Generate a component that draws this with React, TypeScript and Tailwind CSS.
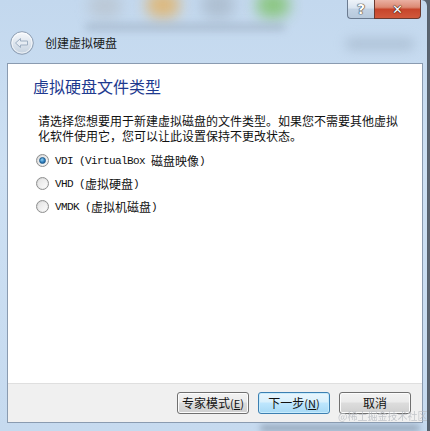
import React from "react";

const cjk = { fontFamily: '"Noto Sans CJK SC", "Noto Sans", sans-serif' };
const mono = { fontFamily: '"Liberation Mono", "DejaVu Sans Mono", monospace' };

function Radio({ checked }: { checked?: boolean }) {
  return (
    <div className="w-[13px] h-[13px] rounded-full border border-[#8e8f8f] bg-gradient-to-br from-[#d4d4d4] to-[#f6f6f6] flex items-center justify-center">
      <div className="w-[9px] h-[9px] rounded-full bg-gradient-to-br from-[#e4e4e4] to-[#fbfbfb] flex items-center justify-center">
        {checked && (
          <div className="w-[7px] h-[7px] rounded-full bg-[radial-gradient(circle_at_40%_35%,#8fd2f5_0%,#2f7fbf_55%,#1b4f80_100%)] border border-[#1f5c8e]" />
        )}
      </div>
    </div>
  );
}

function Label({ latin, cn }: { latin: string; cn: string }) {
  return (
    <span className="flex items-center text-[12px] text-[#111] leading-[14px]">
      <span style={mono} className="text-[11px] tracking-[-0.6px] whitespace-pre">{latin}</span>
      <span style={cjk}>{cn}</span>
      <span style={mono} className="text-[11px] tracking-[-0.6px]">)</span>
    </span>
  );
}

function Btn({ children, primary }: { children: React.ReactNode; primary?: boolean }) {
  return (
    <div
      className={
        "h-[22px] w-[72px] rounded-[3px] border flex items-center justify-center text-[12px] text-[#111] " +
        (primary
          ? "border-[#3c7fb1] bg-[linear-gradient(#eaf6fd_0%,#d9f0fc_45%,#bee6fd_50%,#a7d9f5_100%)] shadow-[inset_0_0_0_1px_#c7ecfd]"
          : "border-[#707070] bg-[linear-gradient(#f2f2f2_0%,#ebebeb_45%,#dddddd_50%,#cfcfcf_100%)] shadow-[inset_0_0_0_1px_#fcfcfc]")
      }
      style={cjk}
    >
      {children}
    </div>
  );
}

export default function App() {
  return (
    <div className="w-[430px] h-[431px] flex overflow-hidden relative bg-[#5a6470]">
      <div className="w-[428px] h-full flex flex-col relative bg-[linear-gradient(180deg,#c3d8ee_0%,#cde0f3_40%,#c6daef_100%)] rounded-tr-[6px] border-r border-[#55606c]">
        {/* blurred background decorations */}
        <div className="absolute left-[88px] top-[-6px] w-[34px] h-[24px] rounded-full bg-[#b8c2cc] blur-[7px] opacity-70" />
        <div className="absolute left-[146px] top-[-8px] w-[34px] h-[26px] rounded-full bg-[#e3b264] blur-[7px] opacity-80" />
        <div className="absolute left-[201px] top-[-8px] w-[34px] h-[26px] rounded-full bg-[#a9b9ca] blur-[7px] opacity-80" />
        <div className="absolute left-[256px] top-[-8px] w-[34px] h-[26px] rounded-full bg-[#7fc36a] blur-[7px] opacity-80" />
        <div className="absolute left-[85px] top-[24px] w-[200px] h-[6px] rounded-full bg-[#8fa0b3] blur-[4px] opacity-60" />
        <div className="absolute left-[345px] top-[38px] w-[70px] h-[12px] rounded-full bg-[#9fb2c6] blur-[6px] opacity-60" />
        <div className="absolute left-[260px] bottom-[0px] w-[160px] h-[6px] rounded-full bg-[#6f7f92] blur-[3px] opacity-60" />

        {/* title bar */}
        <div className="h-[63px] flex flex-col relative">
          <div className="h-[19px] flex justify-end pr-[6px]">
            <div className="w-[27px] h-[19px] rounded-bl-[4px] border border-t-0 border-r-0 border-[#6b7b90] bg-[linear-gradient(#eef3f9_0%,#d9e4f0_45%,#c3d3e4_50%,#b7c9dc_100%)] flex items-center justify-center">
              <span className="text-[14px] font-bold text-white leading-none [text-shadow:0_0_1px_#333,0_0_1px_#333,0_0_1px_#333]" style={{ fontFamily: '"DejaVu Sans", sans-serif' }}>?</span>
            </div>
            <div className="w-[47px] h-[19px] rounded-br-[4px] border border-t-0 border-[#6b3a30] bg-[linear-gradient(#eab0a2_0%,#dc8a74_40%,#c7452b_52%,#d1593c_100%)] flex items-center justify-center">
              <span className="text-[13px] font-bold text-white leading-none [text-shadow:0_0_1px_#3a1a10,0_0_1px_#3a1a10,0_0_1px_#3a1a10]" style={{ fontFamily: '"DejaVu Sans", sans-serif' }}>✕</span>
            </div>
          </div>
          <div className="flex items-center pl-[10px] mt-[12px] h-[24px] gap-[11px]">
            <svg width="24" height="24" viewBox="0 0 24 24">
              <defs>
                <linearGradient id="bg" x1="0" y1="0" x2="0" y2="1">
                  <stop offset="0" stopColor="#f7f9fc" />
                  <stop offset="1" stopColor="#c4d1df" />
                </linearGradient>
              </defs>
              <circle cx="12" cy="12" r="11.3" fill="url(#bg)" stroke="#8c9db2" strokeWidth="1" />
              <circle cx="12" cy="12" r="10" fill="none" stroke="#ffffff" strokeWidth="0.8" opacity="0.8" />
              <path d="M5.5 12 L10.5 7.5 L10.5 10 L17.5 10 L17.5 14 L10.5 14 L10.5 16.5 Z" fill="#e6ecf3" stroke="#9eafc2" strokeWidth="1" strokeLinejoin="round" />
            </svg>
            <span className="text-[12px] text-[#1a1a1a] leading-none" style={cjk}>创建虚拟硬盘</span>
          </div>
        </div>

        {/* content */}
        <div className="flex-1 ml-[7px] mr-[4px] flex flex-col border border-[#8a9bb0] relative">
          <div className="flex-1 bg-white flex flex-col pt-[12px] pl-[25px]">
            <div className="text-[16px] leading-[20px] text-[#1e3a8f]" style={cjk}>虚拟硬盘文件类型</div>
            <div className="mt-[17px] ml-[5px] text-[12px] leading-[15px] text-[#111]" style={cjk}>
              <div>请选择您想要用于新建虚拟磁盘的文件类型。如果您不需要其他虚拟</div>
              <div>化软件使用它，您可以让此设置保持不更改状态。</div>
            </div>
            <div className="mt-[6px] ml-[3px] flex flex-col">
              <div className="h-[23px] flex items-center gap-[6px]">
                <Radio checked />
                <Label latin="VDI (VirtualBox " cn="磁盘映像" />
              </div>
              <div className="h-[23px] flex items-center gap-[6px]">
                <Radio />
                <Label latin="VHD (" cn="虚拟硬盘" />
              </div>
              <div className="h-[23px] flex items-center gap-[6px]">
                <Radio />
                <Label latin="VMDK (" cn="虚拟机磁盘" />
              </div>
            </div>
          </div>
          <div className="h-[39px] bg-[#f0f0f0] border-t border-[#dfdfdf] flex justify-end items-start pt-[8px] pr-[11px] gap-[9px]">
            <Btn>
              专家模式<span className="text-[11px]">(<span className="underline">E</span>)</span>
            </Btn>
            <Btn primary>
              下一步<span className="text-[11px]">(<span className="underline">N</span>)</span>
            </Btn>
            <Btn>取消</Btn>
          </div>
        </div>
        <div className="h-[8px]" />
      </div>
      <div className="absolute left-[338px] top-[410px] text-[10px] leading-[12px] text-[#b8bcc2] opacity-80" style={cjk}>
        @稀土掘金技术社区
      </div>
    </div>
  );
}
